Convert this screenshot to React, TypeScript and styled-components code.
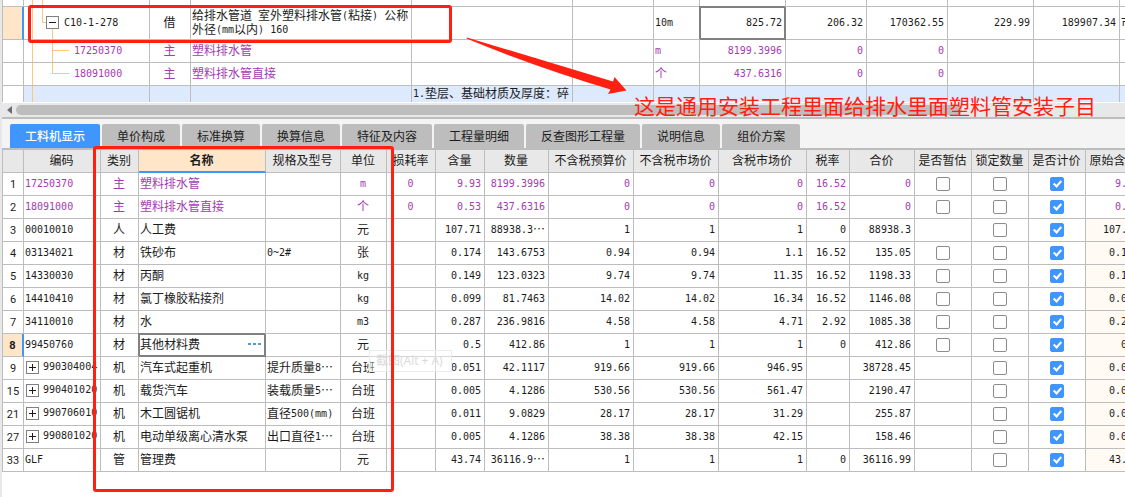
import React from 'react';
import styled, { createGlobalStyle, css } from 'styled-components';

const GlobalStyle = createGlobalStyle`
  *, *::before, *::after { box-sizing: border-box; }
  body {
    margin: 0;
    background: #fff;
    color: #1c1c1c;
    font: 12px/14px "Noto Sans CJK SC", sans-serif;
  }
`;

const line = '#bdbdbd';
const purple = '#a33bb0';
const blue = '#4096ff';
const red = '#ff2012';

const Page = styled.div`
  position: relative;
  min-height: 100vh;
  overflow: hidden;
  border-left: 2px solid #e8e8e8;
`;

const Panel = styled.section`
  overflow: hidden;
  border-left: 1px solid ${line};
`;

const Grid = styled.table<{ $min: number }>`
  table-layout: fixed;
  border-collapse: separate;
  border-spacing: 0;
  width: 100%;
  min-width: ${p => p.$min}px;
`;

type Align = 'left' | 'center' | 'right';

const Row = styled.tr<{ $height: number; $tone?: 'main' | 'section' }>`
  height: ${p => p.$height}px;
  color: ${p => (p.$tone === 'main' ? purple : 'inherit')};
  background: ${p => (p.$tone === 'section' ? '#dde9fd' : '#fff')};
`;

const cellPadding = { left: '0 1px 2px', center: '0 1px 2px 0', right: '0 3px 2px 0' };

const Cell = styled.td<{ $align?: Align; $tint?: boolean; $focus?: boolean; $bare?: boolean }>`
  padding: ${p => cellPadding[p.$align ?? 'left']};
  height: inherit;
  border-right: 1px solid ${line};
  border-bottom: ${p => (p.$bare ? 0 : 1)}px solid ${line};
  text-align: ${p => p.$align ?? 'left'};
  white-space: pre;
  overflow: hidden;
  background: ${p => (p.$tint ? '#fffaf4' : 'transparent')};
  ${p => p.$focus && css`
    border-color: #808080;
    box-shadow: inset 0 0 0 1px #808080, -1px -1px 0 #808080;
  `}
`;

const Latin = styled.span`
  font: 10px/10px "DejaVu Sans Mono", monospace;
  vertical-align: 1px;
`;

const RowNumber = styled.th<{ $selected?: boolean; $bare?: boolean }>`
  padding: ${p => (p.$bare ? 0 : 2)}px 0 0;
  border-right: 1px solid ${line};
  border-bottom: ${p => (p.$bare ? 0 : 1)}px solid ${line};
  background: #fff;
  color: #1c1c1c;
  font: 11px/14px Roboto, sans-serif;
  ${p => p.$selected && css`
    font-weight: 700;
    background: #ffe6c8;
    border-right: 2px solid ${blue};
  `}
`;

const HeadCell = styled.th<{ $active?: boolean }>`
  padding: 0 1px 2px 0;
  border-right: 1px solid ${line};
  border-bottom: ${p => (p.$active ? `2px solid ${blue}` : `1px solid ${line}`)};
  background: ${p => (p.$active ? '#ffe6c8' : '#e8e8e8')};
  font-weight: ${p => (p.$active ? 700 : 400)};
  white-space: nowrap;
  overflow: hidden;
`;

const Tree = styled.div`
  display: flex;
  align-items: center;
  margin: 0 0 -2px -1px;
`;

const TreeLines = styled.svg`
  display: block;
  flex: none;
  overflow: visible;
  shape-rendering: crispEdges;
`;

const ScrollTrack = styled.div`
  display: flex;
  align-items: center;
  gap: 4px;
  height: 14px;
  margin-top: 1px;
  padding: 0 163px 0 5px;
  background: #e8e8e8;
`;

const ScrollThumb = styled.div`
  flex: 1;
  height: 10px;
  border-radius: 5px;
  background: ${line};
`;

const TabBar = styled.nav`
  display: flex;
  gap: 2px;
  padding: 5px 8px 0;
  border-top: 2px solid ${line};
  border-bottom: 2px solid ${line};
  background: #f4f4f4;
`;

const Tab = styled.button<{ $active?: boolean }>`
  flex: none;
  height: 24px;
  padding: 0 15px;
  border: 0;
  border-radius: 2px 2px 0 0;
  background: ${p => (p.$active ? blue : line)};
  color: ${p => (p.$active ? '#fff' : '#1c1c1c')};
  font: inherit;
  font-weight: ${p => (p.$active ? 500 : 400)};
`;

const Check = styled.input`
  appearance: none;
  display: block;
  position: relative;
  width: 14px;
  height: 14px;
  margin: 2px auto 0;
  border: 1px solid #8c8c8c;
  border-radius: 2px;
  background: #fff;

  &:checked {
    border-color: ${blue};
    background: ${blue};
  }

  &:checked::after {
    content: "";
    position: absolute;
    left: 4px;
    top: 1px;
    width: 5px;
    height: 8px;
    border: solid #fff;
    border-width: 0 2px 2px 0;
    transform: rotate(42deg);
  }
`;

const CodeLine = styled.div`
  display: flex;
  align-items: center;
  gap: 4px;
  padding-left: 1px;
`;

const Expander = styled.button`
  flex: none;
  display: block;
  width: 13px;
  height: 13px;
  padding: 0;
  border: 1px solid #808080;
  background: #fff;

  svg { display: block; }
`;

const EditLine = styled.div`
  display: flex;
  justify-content: space-between;
  align-items: center;
  padding-right: 3px;
`;

const MoreButton = styled.button`
  display: flex;
  gap: 2px;
  padding: 0;
  border: 0;
  background: none;

  i { width: 3px; height: 2px; background: #4a9be0; }
`;

const Marker = styled.div<{ $x: number; $y: number; $w: number; $h: number }>`
  position: absolute;
  left: ${p => p.$x}px;
  top: ${p => p.$y}px;
  width: ${p => p.$w}px;
  height: ${p => p.$h}px;
  border: 3px solid ${red};
  border-radius: 3px;
  pointer-events: none;
`;

const Arrow = styled.svg`
  position: absolute;
  left: 462px;
  top: 36px;
  pointer-events: none;
`;

const Caption = styled.p`
  position: absolute;
  left: 632px;
  top: 92px;
  margin: 0;
  color: ${red};
  font-size: 21px;
  line-height: 26px;
  white-space: nowrap;
`;

const Hint = styled.div`
  position: absolute;
  left: 367px;
  top: 350px;
  padding: 0 8px 0 6px;
  border: 1px solid #ebebeb;
  background: rgba(255, 255, 255, 0.4);
  color: #dadada;
  font-family: "Open Sans", "Noto Sans CJK SC", sans-serif;
  line-height: 20px;
  white-space: nowrap;
`;

const topCols = [21, 126, 41, 221, 161, 81, 46, 86, 81, 81, 86, 86];
const topAlign: Align[] = ['left', 'center', 'left', 'left', 'left', 'left', 'right', 'right', 'right', 'right', 'right', 'left'];

type TopRow = { height: number; tone?: 'main' | 'section'; selected?: boolean; bare?: boolean; cells: string[] };

const topRows: TopRow[] = [
  { height: 7, cells: ['', '', '', '', '', '', '', '', '', '', '', ''] },
  { height: 33, selected: true, cells: ['C10-1-278', '借', '给排水管道 室外塑料排水管(粘接) 公称\n外径(mm以内) 160', '', '', '10m', '825.72', '206.32', '170362.55', '229.99', '189907.34', '市'] },
  { height: 23, tone: 'main', cells: ['17250370', '主', '塑料排水管', '', '', 'm', '8199.3996', '0', '0', '', '', ''] },
  { height: 23, tone: 'main', cells: ['18091000', '主', '塑料排水管直接', '', '', '个', '437.6316', '0', '0', '', '', ''] },
  { height: 16, tone: 'section', bare: true, cells: ['', '', '', '1.垫层、基础材质及厚度：碎', '', '', '', '', '', '', '', ''] },
];

const treePaths = [
  { width: 40, height: 6, d: 'M8.5 0V7M18.5 0V7' },
  { width: 40, height: 32, d: 'M8.5 0V33M18.5 0V15.5H22M28.5 22V33' },
  { width: 50, height: 22, d: 'M8.5 0V23M28.5 0V23M28.5 10.5H45' },
  { width: 50, height: 22, d: 'M8.5 0V23M28.5 0V10.5H45' },
  { width: 40, height: 16, d: 'M8.5 0V16' },
];

/* Latin runs are set in the monospaced face, Chinese runs in the body face. */
const Value = ({ text }: { text: string }) => (
  <>
    {(text.match(/[\x20-\x7e]+|[^\x20-\x7e]+/g) ?? []).map((run, i) =>
      /^[\x20-\x7e]/.test(run) ? <Latin key={i}>{run}</Latin> : <React.Fragment key={i}>{run}</React.Fragment>,
    )}
  </>
);

const TreeCell = ({ index, text }: { index: number; text: string }) => {
  const art = treePaths[index];
  return (
    <Tree>
      <TreeLines width={art.width} height={art.height}>
        <path d={art.d} fill="none" stroke="#ffc77d" />
        {index === 1 && (
          <>
            <rect x="22.5" y="9.5" width="12" height="12" fill="#fff" stroke="#808080" />
            <path d="M25 15.5H32" stroke="#1c1c1c" />
          </>
        )}
      </TreeLines>
      <Value text={text} />
    </Tree>
  );
};

const tabs = ['工料机显示', '单价构成', '标准换算', '换算信息', '特征及内容', '工程量明细', '反查图形工程量', '说明信息', '组价方案'];

const cols = [21, 77, 38, 127, 75, 46, 49, 49, 64, 85, 85, 88, 43, 65, 57, 57, 57];
const heads = ['', '编码', '类别', '名称', '规格及型号', '单位', '损耗率', '含量', '数量', '不含税预算价', '不含税市场价', '含税市场价', '税率', '合价', '是否暂估', '锁定数量', '是否计价', '原始含量'];
const bodyAlign: Align[] = ['left', 'center', 'left', 'left', 'center', 'center', 'right', 'right', 'right', 'right', 'right', 'right', 'right'];

type Item = { no: number; main?: boolean; group?: boolean; estimate?: boolean; selected?: boolean; cells: string[] };

const items: Item[] = [
  { no: 1, main: true, estimate: true, cells: ['17250370', '主', '塑料排水管', '', 'm', '0', '9.93', '8199.3996', '0', '0', '0', '16.52', '0'] },
  { no: 2, main: true, estimate: true, cells: ['18091000', '主', '塑料排水管直接', '', '个', '0', '0.53', '437.6316', '0', '0', '0', '16.52', '0'] },
  { no: 3, cells: ['00010010', '人', '人工费', '', '元', '', '107.71', '88938.3…', '1', '1', '1', '0', '88938.3'] },
  { no: 4, estimate: true, cells: ['03134021', '材', '铁砂布', '0~2#', '张', '', '0.174', '143.6753', '0.94', '0.94', '1.1', '16.52', '135.05'] },
  { no: 5, estimate: true, cells: ['14330030', '材', '丙酮', '', 'kg', '', '0.149', '123.0323', '9.74', '9.74', '11.35', '16.52', '1198.33'] },
  { no: 6, estimate: true, cells: ['14410410', '材', '氯丁橡胶粘接剂', '', 'kg', '', '0.099', '81.7463', '14.02', '14.02', '16.34', '16.52', '1146.08'] },
  { no: 7, estimate: true, cells: ['34110010', '材', '水', '', 'm3', '', '0.287', '236.9816', '4.58', '4.58', '4.71', '2.92', '1085.38'] },
  { no: 8, estimate: true, selected: true, cells: ['99450760', '材', '其他材料费', '', '元', '', '0.5', '412.86', '1', '1', '1', '0', '412.86'] },
  { no: 9, group: true, cells: ['990304004', '机', '汽车式起重机', '提升质量8…', '台班', '', '0.051', '42.1117', '919.66', '919.66', '946.95', '', '38728.45'] },
  { no: 15, group: true, cells: ['990401020', '机', '载货汽车', '装载质量5…', '台班', '', '0.005', '4.1286', '530.56', '530.56', '561.47', '', '2190.47'] },
  { no: 21, group: true, cells: ['990706010', '机', '木工圆锯机', '直径500(mm)', '台班', '', '0.011', '9.0829', '28.17', '28.17', '31.29', '', '255.87'] },
  { no: 27, group: true, cells: ['990801020', '机', '电动单级离心清水泵', '出口直径1…', '台班', '', '0.005', '4.1286', '38.38', '38.38', '42.15', '', '158.46'] },
  { no: 33, cells: ['GLF', '管', '管理费', '', '元', '', '43.74', '36116.9…', '1', '1', '1', '0', '36116.99'] },
];

const ItemCell = ({ item, index }: { item: Item; index: number }) => {
  const text = item.cells[index];
  if (index === 0 && item.group) {
    return (
      <CodeLine>
        <Expander aria-label={`展开 ${text}`}>
          <svg width="11" height="11" shapeRendering="crispEdges">
            <path d="M2 5.5H9M5.5 2V9" stroke="#1c1c1c" />
          </svg>
        </Expander>
        <Value text={text} />
      </CodeLine>
    );
  }
  if (index === 2 && item.selected) {
    return (
      <EditLine>
        {text}
        <MoreButton aria-label="更多"><i /><i /><i /></MoreButton>
      </EditLine>
    );
  }
  return <Value text={text} />;
};

export default function App() {
  return (
    <Page>
      <GlobalStyle />
      <Panel>
        <Grid $min={1123}>
          <colgroup>
            {topCols.map((w, i) => <col key={i} width={w} />)}
            <col />
          </colgroup>
          <tbody>
            {topRows.map((row, r) => (
              <Row key={r} $height={row.height} $tone={row.tone}>
                <RowNumber $selected={row.selected} $bare={row.bare} />
                {row.cells.map((text, c) => (
                  <Cell key={c} $align={topAlign[c]} $bare={row.bare} $focus={row.selected && c === 6}>
                    {c === 0 ? <TreeCell index={r} text={text} /> : <Value text={text} />}
                  </Cell>
                ))}
              </Row>
            ))}
          </tbody>
        </Grid>
      </Panel>
      <ScrollTrack>
        <svg width="5" height="8"><path d="M5 0V8L0 4Z" fill="#6a6a72" /></svg>
        <ScrollThumb />
      </ScrollTrack>
      <TabBar>
        {tabs.map((t, i) => <Tab key={t} $active={i === 0}>{t}</Tab>)}
      </TabBar>
      <Panel>
        <Grid $min={1140}>
          <colgroup>
            {cols.map((w, i) => <col key={i} width={w} />)}
            <col />
          </colgroup>
          <thead>
            <Row $height={23}>
              {heads.map((h, i) => <HeadCell key={i} $active={h === '名称'}>{h}</HeadCell>)}
            </Row>
          </thead>
          <tbody>
            {items.map(item => (
              <Row key={item.no} $height={23} $tone={item.main ? 'main' : undefined}>
                <RowNumber $selected={item.selected}>{item.no}</RowNumber>
                {item.cells.map((_, c) => (
                  <Cell key={c} $align={bodyAlign[c]} $focus={item.selected && c === 2}>
                    <ItemCell item={item} index={c} />
                  </Cell>
                ))}
                <Cell $align="center">{item.estimate && <Check type="checkbox" aria-label="是否暂估" />}</Cell>
                <Cell $align="center"><Check type="checkbox" aria-label="锁定数量" /></Cell>
                <Cell $align="center"><Check type="checkbox" aria-label="是否计价" defaultChecked /></Cell>
                <Cell $align="right" $tint={!item.main}><Value text={item.cells[6]} /></Cell>
              </Row>
            ))}
          </tbody>
        </Grid>
      </Panel>
      <Hint>截图(Alt + A)</Hint>
      <Marker $x={26} $y={5} $w={424} $h={38} />
      <Marker $x={91} $y={146} $w={301} $h={346} />
      <Arrow width="164" height="60" viewBox="464 36 164 60">
        <path d="M467 37.5L613 81.5L614.5 77L626.5 90.5L608 94L610.5 89.5Q530 65 466.500 38.500Z" fill={red} />
      </Arrow>
      <Caption>这是通用安装工程里面给排水里面塑料管安装子目</Caption>
    </Page>
  );
}
